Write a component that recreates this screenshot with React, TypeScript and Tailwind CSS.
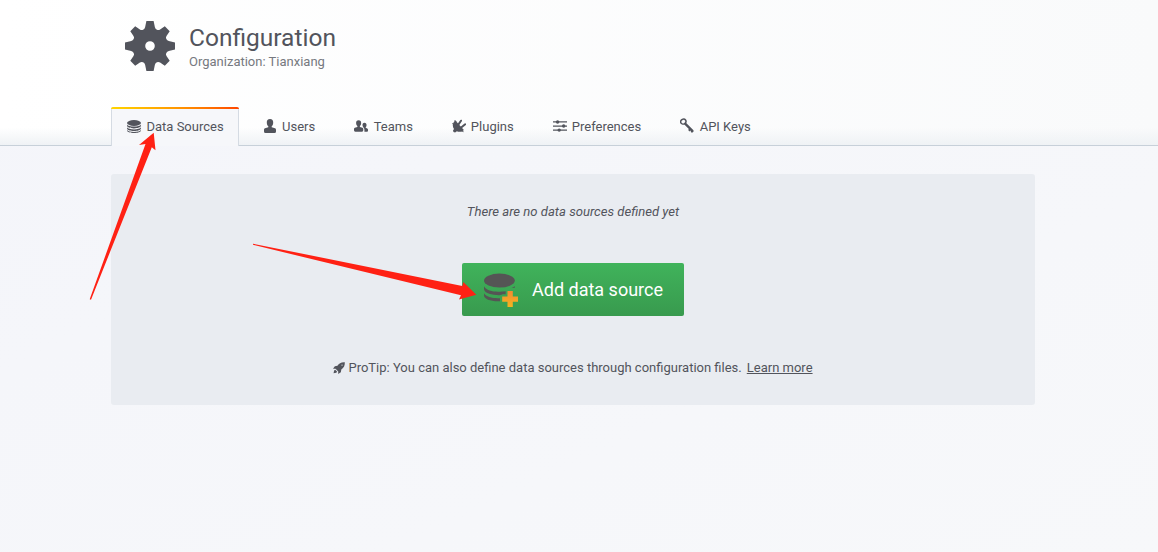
import React from "react";

function Gear() {
  return (
    <svg className="h-[50px] w-[50px] shrink-0 fill-[#52545c]" viewBox="0 0 50 50">
      <path
        fillRule="evenodd"
        d="M21.400 0h7.200l1.300 6.200q.4 1.700 2 2.500t3.200-.2L39.800 5.300 44.700 10.200 41.500 14.900q-1 1.600-.2 3.200t2.500 2L50 21.400v7.200l-6.200 1.300q-1.700.4-2.500 2t.2 3.200L44.700 39.800 39.800 44.700 35.100 41.500q-1.600-1-3.200-.2t-2 2.500L28.600 50h-7.200l-1.300-6.200q-.4-1.700-2-2.500t-3.200.2L10.200 44.700 5.300 39.800 8.500 35.100q1-1.600.2-3.200t-2.500-2L0 28.600v-7.200l6.200-1.300q1.700-.4 2.500-2t-.2-3.200L5.300 10.200 10.200 5.300 14.900 8.500q1.600 1 3.200.2t2-2.500ZM25 20.200a4.800 4.800 0 1 0 0 9.600a4.800 4.800 0 0 0 0-9.600Z"
      />
    </svg>
  );
}

function Database() {
  return (
    <svg className="-mt-px h-[13px] w-[14px]" viewBox="0 0 14 13" fill="currentColor">
      <ellipse cx="7" cy="3" rx="7" ry="2.9" />
      <path d="M0 4.4c1 2.8 13 2.8 14 0v1.2c0 3.7-14 3.7-14 0ZM0 7.3c1 2.8 13 2.8 14 0v.9c0 3.7-14 3.7-14 0ZM0 10c1 2.5 13 2.5 14 0v.4c0 3.3-14 3.3-14 0Z" />
    </svg>
  );
}

function User() {
  return (
    <svg className="-mt-px h-[14px] w-[12px]" viewBox="0 0 12 14" fill="currentColor">
      <path d="M6 0C3.8 0 2.6 1.500 2.800 3.800c.1 1.600.7 2.900 1.500 3.500v1L1 9.200C.2 9.600 0 10.300 0 11v1.500Q0 14 1.500 14h9q1.500 0 1.500-1.500V11c0-.7-.2-1.400-1-1.800l-3.300-.9v-1c.8-.6 1.400-1.900 1.500-3.500C9.400 1.500 8.200 0 6 0Z" />
    </svg>
  );
}

function Team() {
  return (
    <svg className="-mt-px h-[12px] w-[14px]" viewBox="0 0 14.500 12" fill="currentColor">
      <path d="M4.8 0C3 0 2 1.300 2.200 3.200c.1 1.300.6 2.400 1.300 2.900v.9l-2.700.8C.2 8.100 0 8.700 0 9.300v1.200Q0 12 1.300 12h7Q9.600 12 9.600 10.500V9.300c0-.6-.2-1.200-.8-1.500L6.100 7v-.9c.7-.5 1.200-1.600 1.300-2.900C7.600 1.300 6.600 0 4.800 0Z" />
      <path d="M10.800 2.700c-1.400 0-2.200 1-2 2.500.1 1 .5 1.700 1 2.100v.5c.7.5 1 1.100 1 2V12h2.300c.9 0 1.400-.4 1.400-1.300V9.800c0-.7-.2-1-.8-1.300l-1.600-.7v-.5c.5-.4.8-1.100.9-2.100.1-1.500-.7-2.500-2.200-2.500Z" />
    </svg>
  );
}

function Plug() {
  return (
    <svg className="-mt-px h-[14px] w-[14px]" viewBox="0 0 14 14" fill="currentColor">
      <path d="M3.300 1.600 11.900 10.900c-1.700 2-4.800 2.500-7 1.300L3.100 13.400 1.500 13 1 11.500l1-1.500C-.1 7.200.7 3.500 3.300 1.600Z" />
      <path d="M6.500 5.400 9 1.700M9.500 8.300l3.700-3" fill="none" stroke="currentColor" strokeWidth="2" strokeLinecap="round" />
      <path d="M.3 4.500 2.500 6M2.700 1.200l1.800 2M9 11.500l2.500 1.200" stroke="currentColor" strokeWidth="1" />
    </svg>
  );
}

function Sliders() {
  return (
    <svg className="-mt-px h-[12px] w-[14px]" viewBox="0 0 14 12" fill="currentColor">
      <path d="M0 1.300h14v1.300H0ZM0 5.400h14v1.300H0ZM0 9.500h14v1.300H0Z" />
      <circle cx="4.600" cy="2" r="1.700" />
      <circle cx="10.700" cy="6" r="1.700" />
      <circle cx="6.200" cy="10.100" r="1.700" />
    </svg>
  );
}

function Key() {
  return (
    <svg className="-mt-[2px] h-[15px] w-[14px]" viewBox="0 0 14 15" fill="none" stroke="currentColor">
      <ellipse cx="3.300" cy="3.600" rx="2.700" ry="2.400" strokeWidth="1.500" transform="rotate(-35 3.300 3.600)" />
      <path d="m5.400 5.900 7 7" strokeWidth="2.300" strokeLinecap="round" />
      <path d="m10.400 11.300-1.700 1.300M12.600 12.900l-1.300 1.300" strokeWidth="2" />
    </svg>
  );
}

function Rocket() {
  return (
    <svg className="-mt-px h-[12px] w-[12px] fill-[#52545c]" viewBox="0 0 13 13">
      <path d="M12.800.4C9 .1 6.600 1.500 4.800 4.100L2 4.500 0 7.300l2.800-.1 2.900 3.100-.1 2.700 2.900-2 .5-2.900C11.900 6.200 12.900 4 12.800.4Z" />
      <path d="M2.400 8.300 1.200 9.300l-.6 2.900 2.900-.6 1-1Z" />
      <circle cx="9.800" cy="3.300" r=".7" fill="#e9ecf1" />
    </svg>
  );
}

function AddDatabase() {
  return (
    <svg className="h-[36px] w-[36px] shrink-0" viewBox="0 0 36 36">
      <defs>
        <linearGradient id="plus" x1="0" y1="0" x2="0" y2="1">
          <stop offset="0" stopColor="#f48a32" />
          <stop offset="1" stopColor="#f5b51f" />
        </linearGradient>
      </defs>
      <g fill="#555555">
        <ellipse cx="15.400" cy="8.600" rx="15.400" ry="7" />
        <path d="M0 14.300c2.300 4.400 9 5.600 15.400 5.400l6.300-.4v2.900h-3.200c-1.500.9-4 1.100-6 .9C5 22.500 0 20.400 0 16.800ZM0 21.300c2.300 3.800 8.500 5.200 16 4.900v3C7 29.600 0 27.200 0 23.500Z" />
        <path d="M30.800 14.200v1.600l-3 .3Z" />
      </g>
      <path fill="url(#plus)" d="M23.500 19h5.300v5.500H34v5.200h-5.200V35h-5.300v-5.300h-5.300v-5.200h5.300Z" />
    </svg>
  );
}

const tabs = [
  { label: "Users", icon: <User />, style: "ml-[25px] gap-[6px]" },
  { label: "Teams", icon: <Team />, style: "ml-[39px] gap-[5.500px]" },
  { label: "Plugins", icon: <Plug />, style: "ml-[39px] gap-[5px]" },
  { label: "Preferences", icon: <Sliders />, style: "ml-[39px] gap-[5px]" },
  { label: "API Keys", icon: <Key />, style: "ml-[39px] gap-[5.500px]" },
];

export default function App() {
  return (
    <div className="relative h-[552px] w-[1158px] overflow-hidden bg-linear-to-br from-[#f4f5fa] to-[#f7f8fa] font-['Roboto',sans-serif] text-[13px] text-[#52545c]">
      <header className="flex h-[146px] flex-col justify-between border-b border-[#c7d0d9] bg-[linear-gradient(180deg,transparent_88%,#eff2f5),linear-gradient(90deg,#ffffff,#f9fafb)] pl-[111px]">
        <div className="flex pt-[21px] pl-[14px]">
          <Gear />
          <div className="pl-[14px]">
            <h1 className="mt-[1px] text-[24.5px] leading-[32px] font-normal">Configuration</h1>
            <div className="text-[13px] leading-[16px] text-[#767980]">Organization: Tianxiang</div>
          </div>
        </div>
        <nav className="-mb-px flex h-[39px]">
          <a className="flex w-[128px] flex-col rounded-t-[3px] border-x border-[#d5dbe3] bg-[#f6f7fa]">
            <span className="-mx-px h-[2px] shrink-0 rounded-t-[2px] bg-linear-to-r from-[#ffd500] via-[#ff9900] to-[#ff4400]" />
            <span className="flex h-[35px] items-center gap-[5.500px] pl-[15px]">
              <Database />
              Data Sources
            </span>
          </a>
          {tabs.map((tab) => (
            <a key={tab.label} className={`flex h-[39px] items-center ${tab.style}`}>
              {tab.icon}
              {tab.label}
            </a>
          ))}
        </nav>
      </header>
      <main className="mt-[28px] ml-[111px] flex h-[231px] w-[924px] flex-col items-center rounded-[3px] bg-[#e9ecf1]">
        <p className="mt-[28px] text-[13.100px] leading-[20px] italic">There are no data sources defined yet</p>
        <button className="mt-[41px] flex h-[53px] w-[222px] items-center rounded-[2px] bg-linear-to-b from-[#40b35b] to-[#389a4e] pl-[22px] text-[18px] text-white">
          <AddDatabase />
          <span className="ml-[12px]">Add data source</span>
        </button>
        <p className="mt-[42px] flex items-center leading-[20px]">
          <Rocket />
          <span className="ml-[3px]">ProTip: You can also define data sources through configuration files.</span>
          <a className="ml-[5px] underline">Learn more</a>
        </p>
      </main>
      <svg className="pointer-events-none absolute inset-0 h-[552px] w-[1158px] fill-[#ff2114]" viewBox="0 0 1158 552">
        <path d="M89.700 299.300 145.500 144 139 145l14.700-12.300 1.800 17.500-3.700-3L91 299.700Z" />
        <path d="m253 243.700 209.300 42.300 1-4 13 12.700-17.300 4.800 2-4.200L253 244.800Z" />
      </svg>
    </div>
  );
}
